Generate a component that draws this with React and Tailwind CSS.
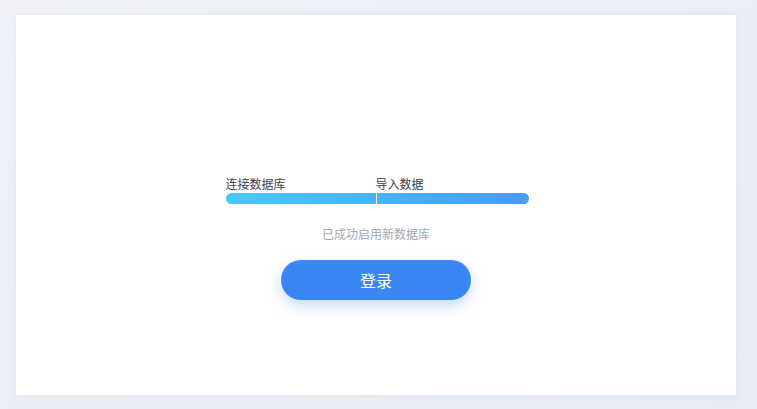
export default function App() {
  return (
    <div
      className="flex h-[409px] w-[757px] bg-gradient-to-br from-[#f1f3f8] to-[#e7ebf4] px-[16px] pb-[14px] pt-[15px]"
      style={{ fontFamily: '"Noto Sans CJK SC", "Noto Sans", sans-serif' }}
    >
      <div className="flex w-[720px] flex-col items-center bg-white pt-[161px] shadow-[0_0_6px_rgba(180,190,215,0.25)]">
        {/* step labels */}
        <div className="ml-[3px] flex w-[304px] text-[12px] leading-[16px] text-[#3c404c]">
          <span className="w-[150px]">连接数据库</span>
          <span>导入数据</span>
        </div>

        {/* progress bar */}
        <div className="ml-[3px] mt-[1px] flex h-[11px] w-[303px] overflow-hidden rounded-full bg-gradient-to-r from-[#45cafe] to-[#4a9af8]">
          <div className="w-[151px] border-r border-white" />
          <div className="flex-1" />
        </div>

        <p className="mt-[22px] text-[12px] leading-[16px] text-[#a2a7b4]">已成功启用新数据库</p>

        <button className="mt-[18px] h-[40px] w-[190px] rounded-full bg-[#3a87f3] text-[16px] text-white shadow-[0_6px_14px_rgba(58,135,243,0.28)]">
          登录
        </button>
      </div>
    </div>
  );
}
